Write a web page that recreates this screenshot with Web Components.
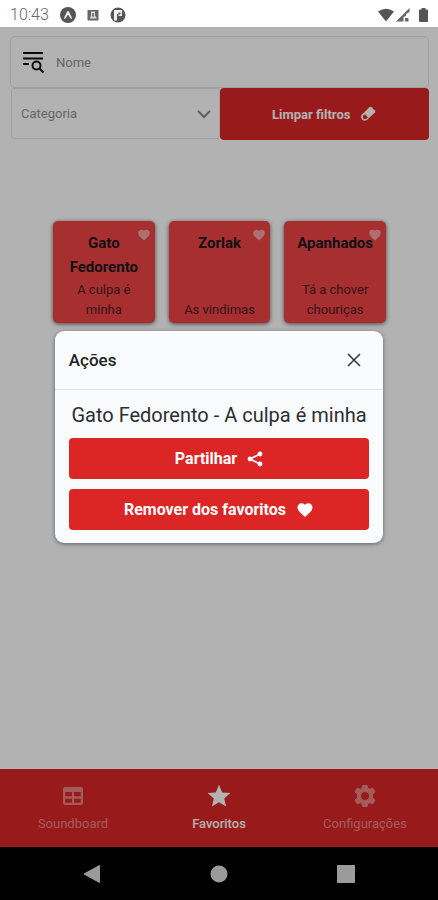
<!DOCTYPE html>
<html lang="pt">
<head>
<meta charset="utf-8">
<meta name="viewport" content="width=device-width, initial-scale=1">
<title>Favoritos</title>
<style>
body { margin: 0; font-family: Roboto, "Liberation Sans", sans-serif; background: #fff; }
</style>
</head>
<body>
<sound-app></sound-app>
<script>
const define = (name, html) => {
  const template = document.createElement('template');
  template.innerHTML = '<style>*{box-sizing:border-box}button,input,select{font:inherit;margin:0}svg{display:block;flex:none}</style>' + html;
  customElements.define(name, class extends HTMLElement {
    constructor() {
      super();
      this.attachShadow({ mode: 'open' }).append(template.content.cloneNode(true));
    }
  });
};

const HEART = 'M12 21.3 10.6 20C5.4 15.4 2 12.3 2 8.5 2 5.4 4.4 3 7.500 3 9.200 3 10.900 3.800 12 5.100 13.100 3.800 14.800 3 16.500 3 19.600 3 22 5.400 22 8.500 22 12.300 18.600 15.400 13.400 20Z';

define('status-bar', `
<style>
:host { display: flex; align-items: center; height: 27px; padding: 2px 8px 0 10px; color: #666; font-size: 16px; background: #fff; }
.time { margin-right: 11px; font-weight: 300; }
.left { display: flex; align-items: center; gap: 10px; flex: 1; }
.right { display: flex; align-items: center; gap: 2px; }
</style>
<span class="time">10:43</span>
<div class="left">
  <svg width="16" height="16" viewBox="0 0 16 16"><circle cx="8" cy="8" r="8" fill="#555"/><path d="M3.800 11.500 7 4.800Q8 3.300 9 4.800L12.200 11.500Q11 12.300 10.300 11L8 7.500 5.700 11Q5 12.300 3.800 11.500Z" fill="#eee"/></svg>
  <svg width="14" height="14" viewBox="0 0 14 14"><path d="M1.500 2H12.500V12.500H1.500Z" fill="#666"/><path d="M5 3.500H9V7.500L11 10.500H3.500L5 8Z" fill="#ddd"/><path d="M6.200 5H7.800V7.500L8.500 8.500H5.500L6.200 7.500Z" fill="#666"/></svg>
  <svg width="16" height="16" viewBox="0 0 16 16"><circle cx="8" cy="8" r="7.500" fill="#555"/><path d="M4 3H12V9H8.500V7H7V13.500H4Z" fill="#eee"/><path d="M8.500 5.500H10.500V7.500H8.500Z" fill="#555"/></svg>
</div>
<div class="right">
  <svg width="16" height="14" viewBox="0 0 16 14"><path d="M0 3.500Q8-2 16 3.500L8 13.500Z" fill="#555"/></svg>
  <svg width="16" height="14" viewBox="0 0 16 14"><path d="M0 13.500 13.500 0V4L10 6V8L7.500 9V13.500Z" fill="#666"/><path d="M9 10H12.500V13.500H9Z" fill="#666"/></svg>
  <svg style="margin-left:4px" width="12" height="14" viewBox="0 0 12 14"><path d="M3.500 0H7.500V1.500H9Q10 1.500 10 2.500V13Q10 14 9 14H2Q1 14 1 13V2.500Q1 1.500 2 1.500H3.500Z" fill="#555"/></svg>
</div>`);

define('filter-panel', `
<style>
:host { display: block; padding: 9px 9px 0 10px; font-size: 13px; }
.search { display: flex; align-items: center; gap: 11px; height: 52px; padding: 0 10px; border: 1px solid #e6e6e8; border-radius: 5px; }
input { flex: 1; min-width: 0; border: 0; outline: 0; padding: 0; background: none; color: #222; }
input::placeholder { color: #929296; opacity: 1; }
.row { display: grid; grid-template-columns: 1fr 1fr; }
.pick { position: relative; margin-left: 1px; }
select { appearance: none; width: 100%; height: 51px; border: 1px solid #e6e6e8; border-radius: 3px; padding: 0 32px 0 9px; background: none; color: #929296; }
.pick svg { position: absolute; right: 9px; top: 20px; pointer-events: none; }
button { display: flex; align-items: center; justify-content: center; gap: 10px; border: 0; border-radius: 4px; background: #dc2626; color: #fff; font-weight: 700; height: 52px; }
</style>
<div class="search">
  <svg width="24" height="24" viewBox="0 0 24 24" fill="none" stroke="#111" stroke-width="2"><path d="M2 3H22M2 8.500H22M2 14H8"/><circle cx="15.500" cy="15.500" r="4"/><path d="M18.500 18.500 22.500 22.500" stroke-width="2.200"/></svg>
  <input type="text" placeholder="Nome" aria-label="Nome">
</div>
<div class="row">
  <div class="pick">
    <select aria-label="Categoria"><option>Categoria</option></select>
    <svg width="14" height="12" viewBox="0 0 14 12" fill="none" stroke="#88888c" stroke-width="2"><path d="M1 3 7 9 13 3"/></svg>
  </div>
  <button type="button">Limpar filtros
    <svg width="16" height="16" viewBox="0 0 16 16"><path d="M9.500 1.200Q10.500.300 11.500 1.200L14.900 4.600Q15.800 5.600 14.900 6.600L6.800 14Q4.500 15.400 2.300 13.700L1.800 13.200Q0 11 1.500 9Z" fill="#fff"/><path d="M4.800 8.200 8 11.400 6.200 12.800Q4.500 13.600 3.300 12.500 2.200 11.200 3.200 9.700Z" fill="#dc2626"/></svg>
  </button>
</div>`);

define('sound-card', `
<style>
:host { display: block; }
button { position: relative; display: flex; flex-direction: column; justify-content: space-between; align-items: center; width: 100%; height: 102px; padding: 10px 8px 3px; border: 0; border-radius: 5px; background: #f04446; box-shadow: 0 1px 4px rgba(0,0,0,.6); color: #17171f; white-space: nowrap; }
.title { font-size: 15px; line-height: 24px; font-weight: 700; white-space: normal; }
.text { font-size: 13px; line-height: 20px; color: #4a1c24; padding: 0 6px; white-space: normal; }
svg { position: absolute; top: 7px; right: 4px; }
</style>
<button type="button">
  <span class="title"><slot name="title"></slot></span>
  <span class="text"><slot></slot></span>
  <svg width="14" height="14" viewBox="0 0 24 24"><path d="${HEART}" fill="#f4a4a4"/></svg>
</button>`);

define('tab-bar', `
<style>
:host { display: block; background: #dc2626; }
nav { display: grid; grid-template-columns: repeat(3, 1fr); height: 78px; font-size: 13px; }
a { display: flex; flex-direction: column; align-items: center; gap: 8px; padding-top: 15px; color: #e98484; text-decoration: none; line-height: 16px; }
a[aria-current] { color: #fff; font-weight: 500; }
</style>
<nav>
  <a href="#soundboard"><svg width="24" height="24" viewBox="0 0 24 24"><path fill="currentColor" fill-rule="evenodd" d="M4 3H20Q22 3 22 5V19Q22 21 20 21H4Q2 21 2 19V5Q2 3 4 3ZM4.200 8V12.300H11V8ZM13 8V12.300H19.800V8ZM4.200 14.700V18.700H11V14.700ZM13 14.700V18.700H19.800V14.700Z"/></svg>Soundboard</a>
  <a href="#favoritos" aria-current="page"><svg width="24" height="24" viewBox="0 0 24 24"><path fill="currentColor" d="M12 .8 15.200 8.400 23.400 9.100 17.200 14.500 19.100 22.500 12 18.300 4.900 22.500 6.800 14.500.6 9.100 8.800 8.400Z"/></svg>Favoritos</a>
  <a href="#configuracoes"><svg width="26" height="24" viewBox="0 0 24 24"><path fill="currentColor" stroke="currentColor" stroke-linejoin="round" fill-rule="evenodd" d="M9.800 1.500H14.200L14.800 4.200 16.700 5.300 19.800 4.200 22 8 19.500 10.200V13.800L22 16 19.800 19.800 16.700 18.700 14.800 19.800 14.200 22.500H9.800L9.200 19.800 7.300 18.700 4.200 19.800 2 16 4.500 13.800V10.200L2 8 4.200 4.200 7.300 5.300 9.200 4.200ZM12 7.500A4.500 4.500 0 1 0 12 16.500 4.500 4.500 0 1 0 12 7.500Z"/></svg>Configurações</a>
</nav>`);

define('action-dialog', `
<style>
:host { display: block; width: 75%; border-radius: 9px; background: #fafbfd; color: #222226; box-shadow: 0 1px 4px rgba(0,0,0,.45); }
header { display: flex; align-items: center; justify-content: space-between; height: 59px; padding: 0 22px 0 14px; border-bottom: 1px solid #e4e5e8; }
h2 { margin: 0; font-size: 17px; line-height: 24px; font-weight: 500; }
.close { display: flex; padding: 0; border: 0; background: none; color: #333; }
.body { display: flex; flex-direction: column; padding: 11px 14px 13px; }
p { margin: 0 0 9px; font-size: 20px; line-height: 28px; text-align: center; color: #2d2d33; }
.act { display: flex; align-items: center; justify-content: center; gap: 10px; height: 41px; border: 0; border-radius: 4px; background: #dc2626; color: #fff; font-size: 16px; font-weight: 700; }
.act + .act { margin-top: 10px; }
</style>
<header>
  <h2>Ações</h2>
  <button class="close" type="button" aria-label="Fechar"><svg width="14" height="14" viewBox="0 0 14 14" fill="none" stroke="currentColor" stroke-width="1.500"><path d="M1 1 13 13M13 1 1 13"/></svg></button>
</header>
<div class="body">
  <p><slot></slot></p>
  <button class="act" type="button">Partilhar
    <svg width="16" height="16" viewBox="0 0 16 16" fill="#fff"><path d="M13 3 3 8 13 13" fill="none" stroke="#fff" stroke-width="1.600"/><circle cx="13" cy="3" r="2.400"/><circle cx="3" cy="8" r="2.400"/><circle cx="13" cy="13" r="2.400"/></svg>
  </button>
  <button class="act" type="button">Remover dos favoritos
    <svg width="18" height="18" viewBox="0 0 24 24"><path d="${HEART}" fill="#fff"/></svg>
  </button>
</div>`);

define('system-bar', `
<style>
:host { display: grid; grid-template-columns: repeat(3, 1fr); align-items: center; justify-items: center; height: 53px; padding: 0 29px; background: #000; }
button { display: flex; padding: 0; border: 0; background: none; color: #9b9b9b; }
</style>
<button type="button" aria-label="Voltar"><svg width="18" height="18" viewBox="0 0 18 18"><path d="M1 9 16.500.500V17.500Z" fill="currentColor" stroke="currentColor" stroke-linejoin="round"/></svg></button>
<button type="button" aria-label="Início"><svg width="18" height="18" viewBox="0 0 18 18"><circle cx="9" cy="9" r="8.500" fill="currentColor"/></svg></button>
<button type="button" aria-label="Recentes"><svg width="18" height="18" viewBox="0 0 18 18"><rect width="18" height="18" rx="1" fill="currentColor"/></svg></button>`);

define('sound-app', `
<style>
:host { display: flex; flex-direction: column; min-height: 100vh; }
.app { position: relative; display: flex; flex-direction: column; flex: 1; }
main { flex: 1; }
.cards { display: grid; grid-template-columns: repeat(3, 1fr); gap: 14px; padding: 81px 52px 24px 53px; }
.backdrop { position: absolute; inset: 0; display: flex; align-items: center; justify-content: center; background: rgba(0,0,0,.3); }
</style>
<status-bar></status-bar>
<div class="app">
  <main>
    <filter-panel></filter-panel>
    <div class="cards">
      <sound-card><span slot="title">Gato Fedorento</span>A culpa é minha</sound-card>
      <sound-card><span slot="title">Zorlak</span>As vindimas</sound-card>
      <sound-card><span slot="title">Apanhados</span>Tá a chover chouriças</sound-card>
    </div>
  </main>
  <tab-bar></tab-bar>
  <div class="backdrop"><action-dialog role="dialog" aria-modal="true" aria-label="Ações">Gato Fedorento - A culpa é minha</action-dialog></div>
</div>
<system-bar></system-bar>`);
</script>
</body>
</html>
